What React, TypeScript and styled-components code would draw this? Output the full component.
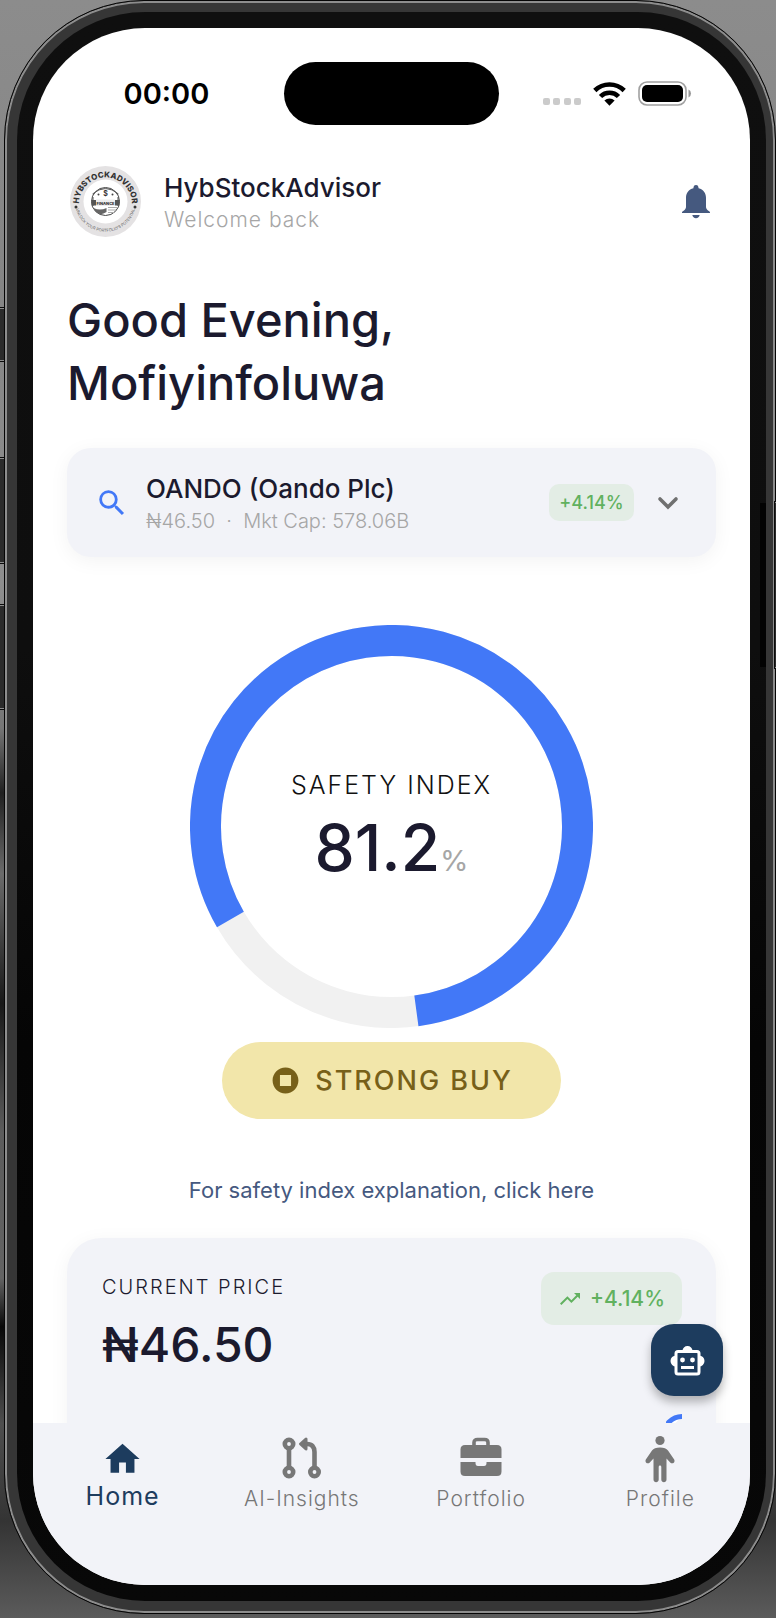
import React from "react";
import styled, { createGlobalStyle } from "styled-components";

const color = {
  ink: "#1b1a2e",
  muted: "#a6a6a6",
  slate: "#45597f",
  blue: "#4278f7",
  navy: "#1d3c5e",
  surface: "#f2f3f8",
  green: "#61b15f",
  greenTint: "#e3ede5",
  icon: "#777777",
};

const GlobalStyle = createGlobalStyle`
  * { box-sizing: border-box; }
  body {
    margin: 0;
    background: #555;
    font-family: Inter, "Open Sans", sans-serif;
    color: ${color.ink};
  }
  h1, h2, p { margin: 0; font-weight: inherit; }
  button { font: inherit; color: inherit; border: 0; padding: 0; cursor: pointer; }
  svg { display: block; flex: none; }
`;

/* ---------- Phone shell ---------- */

const Backdrop = styled.div`
  position: relative;
  height: 100vh;
  padding: 0 0 4px 4px;
  overflow: hidden;
  background: linear-gradient(180deg, #8c8c8c 0, #858585 18%, #8e8e8e 36%, #767676 45%, #202020 49%, #6b6b6b 54%, #181818 62%, #5c5c5c 70%, #636363 79%, #080808 82%, #4e4e4e 88%, #343434 94%, #5b5b5b 100%);
`;

const Frame = styled.div`
  position: relative;
  height: 100%;
  border-radius: 140px;
  background: #363636;
  border: 1px solid #050505;
  box-shadow: inset 0 0 0 2px #8d8d8d;
  padding: 11px 9px 12px 12px;
`;

const Bezel = styled.div`
  height: 100%;
  border-radius: 128px;
  background: linear-gradient(180deg, #0f0f0f 0, #0e0e0e 40%, #050505 65%, #080808 100%);
  padding: 16px;
`;

const Screen = styled.div`
  position: relative;
  height: 100%;
  border-radius: 112px;
  overflow: hidden;
  background: #fff;
  display: flex;
  flex-direction: column;
`;

const SideKey = styled.span<{ $top: number; $size: number; $side?: "left" | "right" }>`
  position: absolute;
  top: ${(p) => p.$top}px;
  ${(p) => p.$side ?? "left"}: 0;
  width: ${(p) => (p.$side === "right" ? 1 : 5)}px;
  height: ${(p) => p.$size}px;
  background: #2b2b2b;
  border: solid #8d8d8d;
  border-width: 1px 0;
  outline: 1px solid #0a0a0a;

  &::after {
    content: "";
    position: absolute;
    top: 0;
    ${(p) => p.$side ?? "left"}: ${(p) => (p.$side === "right" ? 10 : 16)}px;
    width: 6px;
    height: 100%;
    background: #020202;
  }
`;

/* ---------- Status bar ---------- */

const StatusBar = styled.header`
  flex: none;
  display: grid;
  grid-template-columns: 1fr 215px 1fr;
  align-items: center;
  padding: 34px 36px 0;
`;

const Clock = styled.time`
  justify-self: center;
  padding-right: 20px;
  font-size: 29px;
  line-height: 36px;
  font-weight: 600;
  color: #000;
`;

const Island = styled.div`
  height: 63px;
  border-radius: 32px;
  background: #000;
`;

const StatusIcons = styled.div`
  justify-self: end;
  display: flex;
  align-items: center;
  gap: 12px;
  padding-right: 22px;
`;

/* ---------- Content ---------- */

const Content = styled.main`
  flex: 1;
  min-height: 0;
  overflow-y: auto;
  scrollbar-width: none;
  padding: 41px 34px 0;
`;

const Brand = styled.div`
  display: flex;
  align-items: center;
  gap: 23px;
  padding: 0 6px 0 3px;
`;

const Stack = styled.div`
  flex: 1;
  min-width: 0;
  padding-top: 2px;
`;

const Title = styled.h2`
  font-size: 26px;
  line-height: 34px;
  font-weight: 450;
`;

const Caption = styled.p<{ $tracked?: boolean }>`
  font-size: ${(p) => (p.$tracked ? 21 : 20)}px;
  line-height: 30px;
  font-weight: 300;
  letter-spacing: ${(p) => (p.$tracked ? "1px" : "normal")};
  white-space: pre;
  color: ${color.muted};
`;

const IconButton = styled.button`
  background: none;
`;

const Greeting = styled.h1`
  margin-top: 51px;
  font-size: 47px;
  line-height: 63px;
  font-weight: 450;
`;

const Card = styled.section`
  background: ${color.surface};
  box-shadow: 0 4px 20px rgba(0, 0, 0, 0.05);
`;

const StockPicker = styled(Card)`
  display: flex;
  align-items: center;
  margin-top: 34px;
  height: 109px;
  padding: 0 32px 0 28px;
  border-radius: 24px;
`;

const StockText = styled(Stack)`
  padding-left: 17px;
`;

const Change = styled.span<{ $large?: boolean }>`
  display: flex;
  align-items: center;
  justify-content: center;
  gap: ${(p) => (p.$large ? 8 : 0)}px;
  width: ${(p) => (p.$large ? 141 : 85)}px;
  height: ${(p) => (p.$large ? 53 : 37)}px;
  border-radius: ${(p) => (p.$large ? 13 : 10)}px;
  background: ${color.greenTint};
  color: ${color.green};
  font-size: ${(p) => (p.$large ? 21 : 18)}px;
  font-weight: 500;
`;

const Expand = styled(IconButton)`
  margin-left: 18px;
`;

const Gauge = styled.section`
  display: grid;
  width: 403px;
  max-width: 100%;
  margin: 68px auto 0;

  & > * {
    grid-area: 1 / 1;
  }
`;

const GaugeText = styled.div`
  place-self: center;
  padding-top: 18px;
  text-align: center;
`;

const GaugeLabel = styled.p`
  font-size: 25px;
  line-height: 30px;
  font-weight: 300;
  letter-spacing: 2px;
  color: #111;
`;

const GaugeValue = styled.p`
  margin-top: 8px;
  font-size: 64px;
  line-height: 80px;
  font-weight: 500;

  small {
    font-size: 29px;
    font-weight: 400;
    color: ${color.muted};
  }
`;

const Signal = styled.button`
  display: flex;
  align-items: center;
  justify-content: center;
  gap: 14px;
  width: 339px;
  max-width: 100%;
  height: 77px;
  margin: 14px auto 0;
  border-radius: 39px;
  background: #f2e6aa;
  color: #776019;
  font-size: 27px;
  font-weight: 500;
  letter-spacing: 2px;
`;

const Explain = styled.a`
  display: block;
  margin-top: 58px;
  text-align: center;
  font-size: 22px;
  line-height: 26px;
  color: ${color.slate};
  text-decoration: none;
`;

const PriceCard = styled(Card)`
  display: flex;
  justify-content: space-between;
  align-items: flex-start;
  flex-wrap: wrap;
  margin-top: 35px;
  padding: 34px 34px 24px 35px;
  border-radius: 34px;
`;

const PriceLabel = styled.p`
  font-size: 20px;
  line-height: 30px;
  font-weight: 300;
  letter-spacing: 2px;
`;

const Price = styled.p`
  font-size: 48px;
  line-height: 62px;
  margin-top: 12px;
  font-weight: 500;
`;

const Loading = styled.div`
  flex: 0 0 100%;
  display: flex;
  justify-content: flex-end;
  margin-top: 38px;
  height: 60px;
`;

/* ---------- Assistant button and bottom tabs ---------- */

const Dock = styled.div`
  position: relative;
  flex: none;
`;

const Assistant = styled.button`
  position: absolute;
  right: 27px;
  bottom: calc(100% + 27px);
  display: grid;
  place-items: center;
  width: 72px;
  height: 72px;
  border-radius: 23px;
  background: ${color.navy};
  box-shadow: 0 6px 10px rgba(0, 0, 0, 0.28);
`;

const Tabs = styled.nav`
  display: grid;
  grid-template-columns: repeat(4, 1fr);
  height: 162px;
  padding-top: 12px;
  background: ${color.surface};
`;

const Tab = styled.a<{ $active?: boolean }>`
  display: flex;
  flex-direction: column;
  align-items: center;
  text-decoration: none;
  font-weight: ${(p) => (p.$active ? 400 : 300)};
  font-size: ${(p) => (p.$active ? 25 : 21)}px;
  line-height: ${(p) => (p.$active ? 23 : 28)}px;
  letter-spacing: 1px;
  color: ${(p) => (p.$active ? color.navy : color.icon)};

  svg {
    height: 48px;
    margin-bottom: 2px;
  }
`;

/* ---------- Drawings ---------- */

const Logo = () => (
  <svg width="71" height="71" viewBox="0 0 142 142" role="img" aria-label="HybStockAdvisor logo">
    <defs>
      <path id="arcTop" d="M18 76 A53 53 0 1 1 124 76" />
      <path id="arcBottom" d="M12 86 A61 61 0 0 0 130 86" />
    </defs>
    <circle cx="71" cy="71" r="71" fill="#e4e2e3" />
    <circle cx="71" cy="71" r="44" fill="#fff" />
    <text fontSize="16" fontWeight="800" fill="#333" textAnchor="middle">
      <textPath href="#arcTop" startOffset="50%">HYBSTOCKADVISOR</textPath>
    </text>
    <text fontSize="8" fill="#666" textAnchor="middle">
      <textPath href="#arcBottom" startOffset="50%">UNLOCK YOUR PORTFOLIO'S POTENTIAL</textPath>
    </text>
    <circle cx="12" cy="82" r="3" fill="#333" />
    <circle cx="130" cy="82" r="3" fill="#333" />
    <circle cx="71" cy="71" r="28" fill="#fff" stroke="#444" strokeWidth="2" />
    <path d="M45 56 Q71 34 97 56 M46 62 V80 M96 62 V80" fill="none" stroke="#555" strokeWidth="2" />
    <text x="71" y="60" fontSize="14" fontWeight="700" fill="#333" textAnchor="middle">$</text>
    <circle cx="57" cy="57" r="2" fill="#444" />
    <circle cx="85" cy="57" r="2" fill="#444" />
    <rect x="43" y="68" width="56" height="11" fill="#555" />
    <rect x="52" y="67" width="38" height="13" fill="#eee" />
    <text x="71" y="77" fontSize="8" fontWeight="800" fill="#333" textAnchor="middle">FINANCE</text>
    <path d="M47 84 Q60 90 73 84 L73 92 Q60 101 51 91Z" fill="#666" />
    <path d="M76 83h18M76 88h16M76 93h12" stroke="#aaa" strokeWidth="2" />
  </svg>
);

const Wifi = () => (
  <svg width="33" height="24" viewBox="0 0 33 24" aria-label="Wi-Fi">
    <g fill="none" stroke="#000" strokeWidth="4.600">
      <path d="M1.800 8.500 A21 21 0 0 1 31.200 8.500" />
      <path d="M7.500 14.500 A12.600 12.600 0 0 1 25.500 14.500" />
    </g>
    <path d="M11.400 18.600 A7.200 7.200 0 0 1 21.600 18.600 L16.500 23.700Z" />
  </svg>
);

const Battery = () => (
  <svg width="54" height="25" viewBox="0 0 54 25" aria-label="Battery full">
    <rect x="1" y="1" width="47" height="23" rx="8" fill="none" stroke="#a0a0a0" strokeWidth="1.600" />
    <rect x="4" y="4" width="41" height="17" rx="5" />
    <path d="M50.500 8.500 Q53 9.500 53 12.500 Q53 15.500 50.500 16.500Z" fill="#999" />
  </svg>
);

const Cellular = () => (
  <svg width="38" height="25" viewBox="0 0 38 25" fill="#cbcbcb" aria-label="No signal">
    {[0, 10, 21, 31].map((x) => (
      <rect key={x} x={x} y="17" width="7" height="7" rx="2" />
    ))}
  </svg>
);

const Bell = () => (
  <svg width="28" height="34" viewBox="0 0 28 34" fill={color.slate}>
    <path d="M14 0c1.700 0 2.500 1.200 2.600 3.300C21.300 4.500 24 8.200 24 12.700V22c0 1.600 1 2.600 2.400 3.700.9.700 1.600 1 1.600 1.700v.6H0v-.6c0-.7.700-1 1.600-1.700C3 24.600 4 23.600 4 22v-9.300c0-4.500 2.700-8.200 7.400-9.400C11.500 1.200 12.300 0 14 0zM10.300 30h7.400c-.3 2-1.800 3.200-3.700 3.200S10.600 32 10.300 30z" />
  </svg>
);

const Material = ({ d, size, fill }: { d: string; size: number; fill: string }) => (
  <svg width={size} height={size} viewBox="0 0 24 24" fill={fill}>
    <path d={d} />
  </svg>
);

const SEARCH =
  "M15.500 14h-.79l-.28-.27A6.471 6.471 0 0 0 16 9.500 6.500 6.500 0 1 0 9.500 16c1.610 0 3.090-.59 4.230-1.570l.27.28v.79l5 4.990L20.490 19l-4.990-5zm-6 0C7.010 14 5 11.990 5 9.500S7.010 5 9.500 5 14 7.010 14 9.500 11.990 14 9.500 14z";
const STOP = "M12 2C6.480 2 2 6.480 2 12s4.480 10 10 10 10-4.480 10-10S17.520 2 12 2zM16.300 16.300H7.700V7.700h8.600z";
const TREND = "M16 6l2.290 2.290-4.880 4.880-4-4L2 16.590 3.410 18l6-6 4 4 6.300-6.290L22 12V6z";
const HOME = "M10 20v-6h4v6h5v-8h3L12 3 2 12h3v8z";

const Ring = () => (
  <svg width="100%" viewBox="0 0 403 403" aria-hidden="true">
    <g fill="none" strokeWidth="31" transform="rotate(150 201.5 201.5)">
      <circle cx="201.500" cy="201.500" r="186" stroke="#f1f1f1" />
      <circle cx="201.500" cy="201.500" r="186" stroke={color.blue} pathLength="1000" strokeDasharray="812 188" />
    </g>
  </svg>
);

const PullRequest = () => (
  <svg width="40" viewBox="0 -3 40 48" fill="none" stroke={color.icon} strokeWidth="4.600">
    <circle cx="7" cy="6" r="4.200" />
    <circle cx="7" cy="34" r="4.200" />
    <circle cx="32.500" cy="34" r="4.200" />
    <path d="M7 10V30M32.500 30V14Q32.500 6 25 6H22" />
    <path d="M18.500 6L24 1V11Z" fill={color.icon} strokeWidth="3" strokeLinejoin="round" />
  </svg>
);

const Briefcase = () => (
  <svg width="42" viewBox="0 -3 42 48" fill={color.icon}>
    <path d="M14 9V4.500Q14 1.500 17.500 1.500H24.500Q28 1.500 28 4.500V9" fill="none" stroke={color.icon} strokeWidth="3.600" />
    <path d="M5 7H37Q41.500 7 41.500 11.500V20H.5V11.500Q.5 7 5 7Z" />
    <path d="M.5 24H15.500V25Q15.500 28 18 28H24Q26.500 28 26.500 25V24H41.500V33.500Q41.500 38 37 38H5Q.5 38 .5 33.500Z" />
  </svg>
);

const Person = () => (
  <svg width="30" viewBox="0 0 30 48" fill={color.icon}>
    <circle cx="15" cy="5.500" r="4.600" />
    <path d="M15 12.500C19 12.500 21.500 13.500 23 15.500L29 24.300C30.800 27 27.500 29.800 25.200 27.500L21.500 23.500V44.500C21.500 48 16.300 48 16.300 44.500V32Q16.300 30.600 15 30.600T13.700 32V44.500C13.700 48 8.500 48 8.500 44.500V23.500L4.800 27.500C2.500 29.800 -.8 27 1 24.300L7 15.500C8.500 13.500 11 12.500 15 12.500Z" />
  </svg>
);

const Robot = () => (
  <svg width="35" height="31" viewBox="0 0 35 31" fill="#fff">
    <path d="M12.500 6a5 5 0 0 1 10 0zM6 10.500v11a5.500 5.500 0 0 1 0-11zM29 10.500v11a5.500 5.500 0 0 0 0-11z" />
    <rect x="6" y="6.500" width="23" height="22.500" rx="2" fill="none" stroke="#fff" strokeWidth="3" />
    <circle cx="12.500" cy="15" r="2.400" />
    <circle cx="22.500" cy="15" r="2.400" />
    <path d="M11 21h13v3H11z" />
  </svg>
);

export default function App() {
  return (
    <Backdrop>
      <GlobalStyle />
      <SideKey $top={308} $size={53} />
      <SideKey $top={458} $size={105} />
      <SideKey $top={605} $size={104} />
      <Frame>
        <Bezel>
          <Screen>
            <StatusBar>
              <Clock>00:00</Clock>
              <Island />
              <StatusIcons>
                <Cellular />
                <Wifi />
                <Battery />
              </StatusIcons>
            </StatusBar>

            <Content>
              <Brand>
                <Logo />
                <Stack>
                  <Title>HybStockAdvisor</Title>
                  <Caption $tracked>Welcome back</Caption>
                </Stack>
                <IconButton aria-label="Notifications">
                  <Bell />
                </IconButton>
              </Brand>

              <Greeting>
                Good Evening,
                <br />
                Mofiyinfoluwa
              </Greeting>

              <StockPicker>
                <Material d={SEARCH} size={34} fill={color.blue} />
                <StockText>
                  <Title>OANDO (Oando Plc)</Title>
                  <Caption>{"₦46.50  ·  Mkt Cap: 578.06B"}</Caption>
                </StockText>
                <Change>+4.14%</Change>
                <Expand aria-label="Choose stock">
                  <svg width="32" height="32" viewBox="0 0 32 32" fill="none" stroke="#707070" strokeWidth="3.600" strokeLinecap="round">
                    <path d="M8 12l8 8 8-8" />
                  </svg>
                </Expand>
              </StockPicker>

              <Gauge>
                <Ring />
                <GaugeText>
                  <GaugeLabel>SAFETY INDEX</GaugeLabel>
                  <GaugeValue>
                    81.2<small>%</small>
                  </GaugeValue>
                </GaugeText>
              </Gauge>

              <Signal>
                <Material d={STOP} size={31} fill="#776019" />
                STRONG BUY
              </Signal>

              <Explain href="#safety-index">For safety index explanation, click here</Explain>

              <PriceCard>
                <div>
                  <PriceLabel>CURRENT PRICE</PriceLabel>
                  <Price>₦46.50</Price>
                </div>
                <Change $large>
                  <Material d={TREND} size={24} fill={color.green} />
                  +4.14%
                </Change>
                <Loading>
                  <svg width="16" height="32" viewBox="0 0 16 32" fill="#fff" stroke={color.blue} strokeWidth="5">
                    <path d="M16 2.500A18 18 0 0 0 -2 20.500" />
                  </svg>
                </Loading>
              </PriceCard>
            </Content>

            <Dock>
              <Assistant aria-label="Open assistant">
                <Robot />
              </Assistant>
              <Tabs>
                <Tab href="#home" $active>
                  <Material d={HOME} size={41} fill={color.navy} />
                  Home
                </Tab>
                <Tab href="#insights">
                  <PullRequest />
                  AI-Insights
                </Tab>
                <Tab href="#portfolio">
                  <Briefcase />
                  Portfolio
                </Tab>
                <Tab href="#profile">
                  <Person />
                  Profile
                </Tab>
              </Tabs>
            </Dock>
          </Screen>
        </Bezel>
      </Frame>
      <SideKey $top={502} $size={166} $side="right" />
    </Backdrop>
  );
}
